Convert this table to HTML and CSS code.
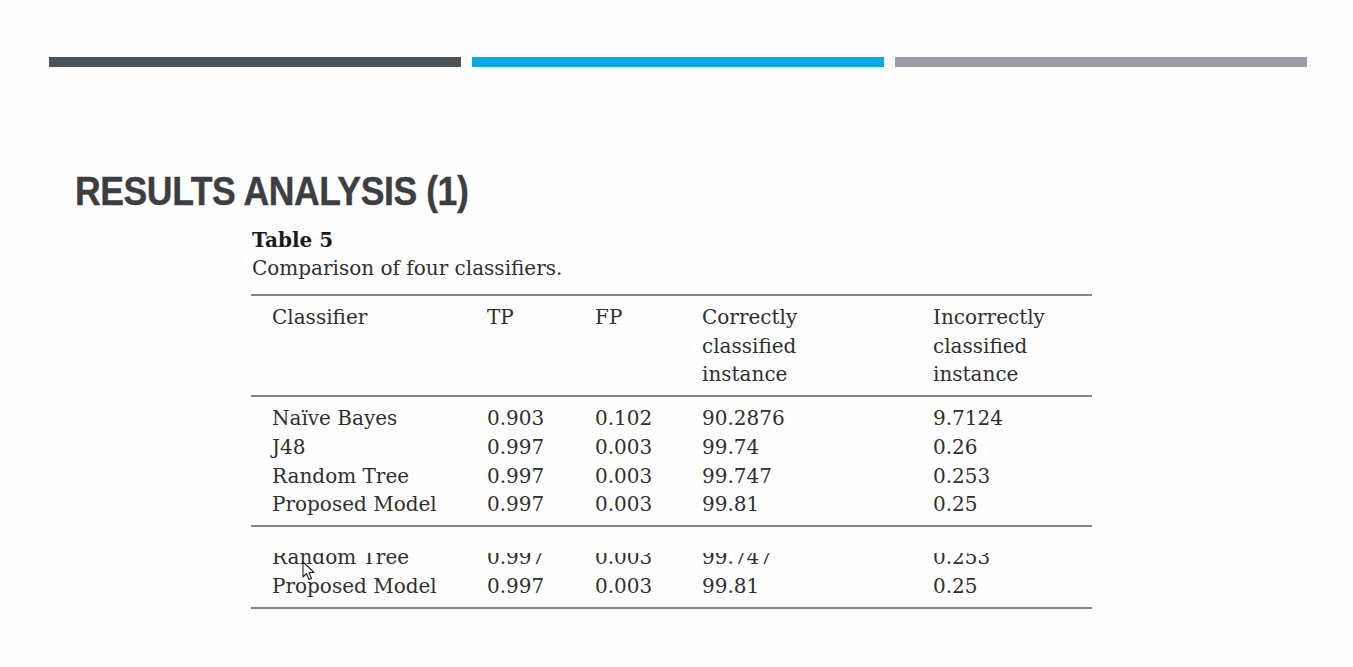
FILE: index.html
```html
<!DOCTYPE html>
<html>
<head>
<meta charset="utf-8">
<link rel="stylesheet" href="styles.css">
</head>
<body>
<div class="slide">
  <div class="bars">
    <div class="bar bar-dark"></div>
    <div class="bar bar-blue"></div>
    <div class="bar bar-gray"></div>
  </div>
  <h1 class="title">RESULTS ANALYSIS (1)</h1>
  <div class="figure">
    <div class="cap-title">Table 5</div>
    <div class="cap-text">Comparison of four classifiers.</div>
    <div class="tbl">
      <div class="thead row">
        <div>Classifier</div>
        <div>TP</div>
        <div>FP</div>
        <div>Correctly<br>classified<br>instance</div>
        <div>Incorrectly<br>classified<br>instance</div>
      </div>
      <div class="tbody">
        <div class="row"><div>Naïve Bayes</div><div>0.903</div><div>0.102</div><div>90.2876</div><div>9.7124</div></div>
        <div class="row"><div>J48</div><div>0.997</div><div>0.003</div><div>99.74</div><div>0.26</div></div>
        <div class="row"><div>Random Tree</div><div>0.997</div><div>0.003</div><div>99.747</div><div>0.253</div></div>
        <div class="row"><div>Proposed Model</div><div>0.997</div><div>0.003</div><div>99.81</div><div>0.25</div></div>
      </div>
      <div class="tail">
        <div class="clip">
          <div class="clip-inner">
            <div class="row"><div>Random Tree</div><div>0.997</div><div>0.003</div><div>99.747</div><div>0.253</div></div>
            <div class="row"><div>Proposed Model</div><div>0.997</div><div>0.003</div><div>99.81</div><div>0.25</div></div>
          </div>
        </div>
      </div>
    </div>
  </div>
  <svg class="cursor" width="13" height="20" viewBox="0 0 13 20">
    <path d="M1 1 L1 16 L4.5 12.5 L7 18.5 L9.5 17.5 L7 11.5 L12 11.5 Z" fill="#fff" stroke="#222" stroke-width="1.1" stroke-linejoin="round"/>
  </svg>
</div>
</body>
</html>
```
FILE: styles.css
```css
html, body {
  margin: 0;
  padding: 0;
  background: #fefefe;
}
.slide {
  position: relative;
  width: 1353px;
  height: 667px;
  overflow: hidden;
}
.bars {
  display: flex;
  gap: 11px;
  padding-left: 49px;
  padding-top: 57px;
}
.bar {
  width: 412px;
  height: 10px;
}
.bar-dark { background: #4b5358; }
.bar-blue { background: #0aa8e2; }
.bar-gray { background: #9b9da6; }
.title {
  margin: 104px 0 0 75px;
  font-family: "Liberation Sans", Arial, sans-serif;
  font-weight: 700;
  font-size: 40px;
  line-height: 40px;
  color: #3c3e41;
  letter-spacing: -0.5px;
  transform: scaleX(0.89);
  transform-origin: left center;
  white-space: nowrap;
  -webkit-text-stroke: 0.4px #3c3e41;
}
.figure {
  margin-left: 251px;
  margin-top: 15px;
  font-family: "DejaVu Serif", "Liberation Serif", serif;
  color: #2f2f2f;
}
.cap-title {
  font-weight: 700;
  font-size: 20px;
  line-height: 28px;
  padding-left: 1px;
  color: #1a1a1a;
}
.cap-text {
  font-size: 20px;
  line-height: 28px;
  padding-left: 1px;
  margin-bottom: 12px;
}
.tbl {
  width: 841px;
  border-top: 2px solid #858585;
  border-bottom: 2px solid #858585;
  font-size: 20px;
  line-height: 28.7px;
}
.row {
  display: grid;
  grid-template-columns: 236px 108px 107px 231px 159px;
}
.row > div:first-child {
  padding-left: 21px;
}
.thead {
  padding: 7px 0 6px;
  border-bottom: 2px solid #858585;
}
.tbody {
  padding: 7px 0 6px;
  border-bottom: 2px solid #858585;
}
.tail {
  padding: 26px 0 7px;
}
.clip {
  height: 47px;
  overflow: hidden;
}
.clip-inner {
  margin-top: -10px;
}
.cursor {
  position: absolute;
  left: 302px;
  top: 561px;
}
```
